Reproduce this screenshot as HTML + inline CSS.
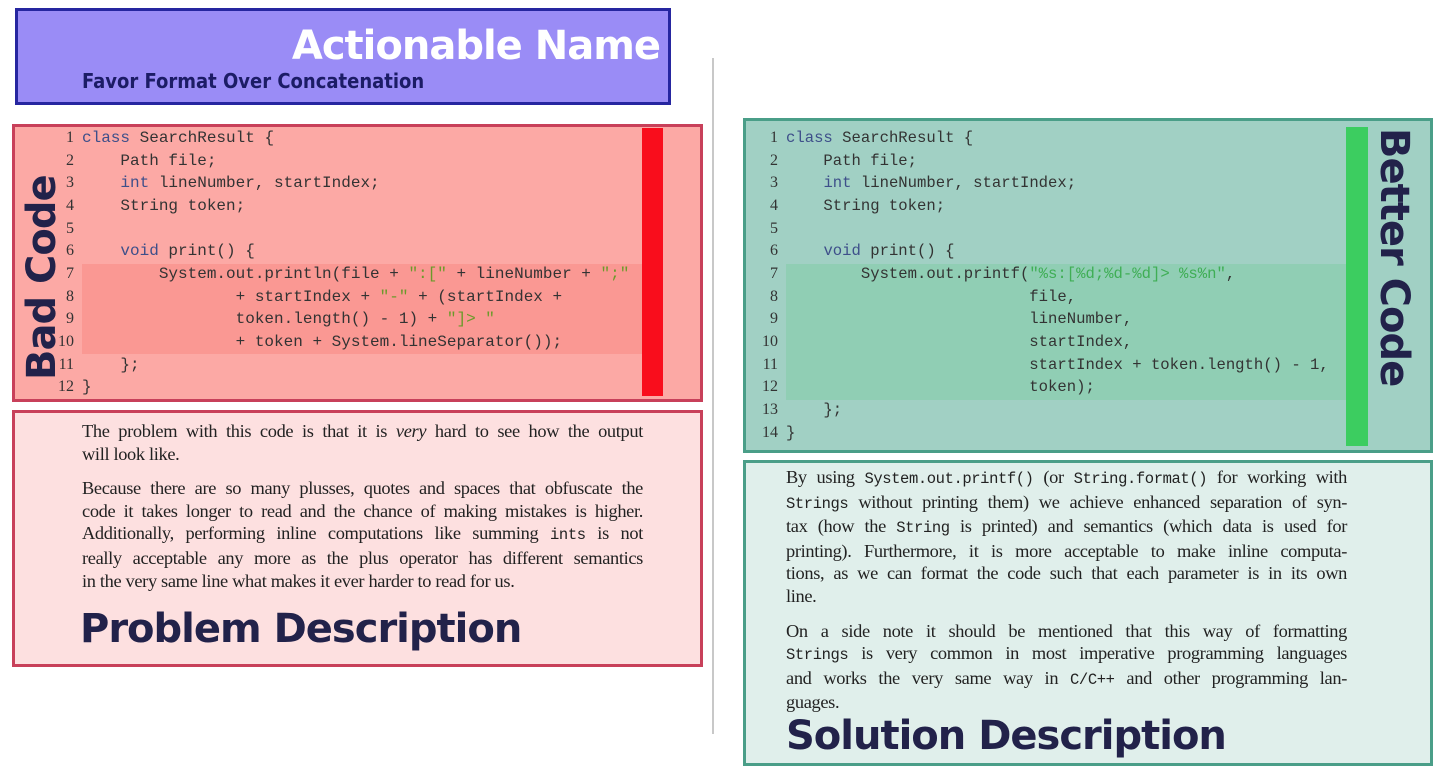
<!DOCTYPE html>
<html><head><meta charset="utf-8"><style>
*{margin:0;padding:0;box-sizing:border-box}
body{width:1436px;height:784px;background:#fff;position:relative;overflow:hidden;font-family:"Liberation Serif",serif;color:#222}
.abs{position:absolute}
.code{font-family:"Liberation Mono",monospace;font-size:16px;line-height:22.65px;white-space:pre;color:#333}
.num{position:absolute;text-align:right;font-family:"Liberation Serif",serif;font-size:16px;line-height:22.65px;color:#333}
.kw{color:#3e4f8a}
.sr{color:#6b9a2a}
.sg{color:#3fae55}
.txt{font-size:18.4px;line-height:22.6px;letter-spacing:-0.35px}
.txt div{text-align:justify;text-align-last:justify;white-space:nowrap}
.txt div.l{text-align-last:left}
.tt{font-family:"Liberation Mono",monospace;font-size:15.5px;letter-spacing:-0.4px}
.head{font-family:"DejaVu Sans",sans-serif;font-weight:bold;color:#22224a;letter-spacing:-1px}
</style></head><body>
<div class="abs" style="left:15px;top:8px;width:656px;height:97px;background:#9a8cf6;border:3px solid #2626a0"></div>
<div class="abs head" style="left:280px;top:20px;width:380px;text-align:right;font-size:40px;color:#fff;line-height:52px">Actionable Name</div>
<div class="abs" style="left:82px;top:68px;font-family:'DejaVu Sans Condensed','DejaVu Sans',sans-serif;font-weight:bold;font-size:20px;color:#1c1c66;line-height:26px">Favor Format Over Concatenation</div>

<div class="abs" style="left:712px;top:58px;width:2px;height:676px;background:#c8c8c8"></div>

<div class="abs" style="left:12px;top:124px;width:691px;height:278px;background:#fca9a5;border:3px solid #c8405a"></div>
<div class="abs" style="left:82px;top:264px;width:560px;height:90px;background:#fa9893"></div>
<div class="abs" style="left:642px;top:128px;width:21px;height:268px;background:#f90d1c"></div>
<div class="num" style="left:50px;top:127px;width:24px">1<br>2<br>3<br>4<br>5<br>6<br>7<br>8<br>9<br>10<br>11<br>12</div>
<div class="abs code" style="left:82px;top:127px"><span class="kw">class</span> SearchResult {
    Path file;
    <span class="kw">int</span> lineNumber, startIndex;
    String token;

    <span class="kw">void</span> print() {
        System.out.println(file + <span class="sr">":["</span> + lineNumber + <span class="sr">";"</span>
                + startIndex + <span class="sr">"-"</span> + (startIndex +
                token.length() - 1) + <span class="sr">"]> "</span>
                + token + System.lineSeparator());
    };
}</div>
<div class="abs head" style="left:20px;top:380px;transform-origin:0 0;transform:rotate(-90deg);font-size:40px;line-height:44px;white-space:nowrap">Bad Code</div>

<div class="abs" style="left:12px;top:410px;width:691px;height:257px;background:#fde0e0;border:3px solid #c8405a"></div>
<div class="abs txt" style="left:82px;top:420px;width:561px">
<div>The problem with this code is that it is <i>very</i> hard to see how the output</div>
<div class="l">will look like.</div>
<div style="margin-top:12px">Because there are so many plusses, quotes and spaces that obfuscate the</div>
<div>code it takes longer to read and the chance of making mistakes is higher.</div>
<div>Additionally, performing inline computations like summing <span class="tt">ints</span> is not</div>
<div>really acceptable any more as the plus operator has different semantics</div>
<div class="l">in the very same line what makes it ever harder to read for us.</div>
</div>
<div class="abs head" style="left:80px;top:603px;font-size:40px;line-height:52px">Problem Description</div>

<div class="abs" style="left:743px;top:118px;width:690px;height:335px;background:#a1d0c4;border:3px solid #4a9e88"></div>
<div class="abs" style="left:786px;top:264px;width:560px;height:136px;background:#90ceb4"></div>
<div class="abs" style="left:1346px;top:127px;width:22px;height:319px;background:#3ccd60"></div>
<div class="num" style="left:752px;top:127px;width:26px">1<br>2<br>3<br>4<br>5<br>6<br>7<br>8<br>9<br>10<br>11<br>12<br>13<br>14</div>
<div class="abs code" style="left:786px;top:127px;font-size:15.6px"><span class="kw">class</span> SearchResult {
    Path file;
    <span class="kw">int</span> lineNumber, startIndex;
    String token;

    <span class="kw">void</span> print() {
        System.out.printf(<span class="sg">"%s:[%d;%d-%d]> %s%n"</span>,
                          file,
                          lineNumber,
                          startIndex,
                          startIndex + token.length() - 1,
                          token);
    };
}</div>
<div class="abs head" style="left:1416px;top:128px;transform-origin:0 0;transform:rotate(90deg);font-size:40px;line-height:44px;white-space:nowrap">Better Code</div>

<div class="abs" style="left:743px;top:460px;width:690px;height:306px;background:#e0efeb;border:3px solid #4a9e88"></div>
<div class="abs txt" style="left:786px;top:466px;width:561px">
<div>By using <span class="tt">System.out.printf()</span> (or <span class="tt">String.format()</span> for working with</div>
<div><span class="tt">Strings</span> without printing them) we achieve enhanced separation of syn-</div>
<div>tax (how the <span class="tt">String</span> is printed) and semantics (which data is used for</div>
<div>printing). Furthermore, it is more acceptable to make inline computa-</div>
<div>tions, as we can format the code such that each parameter is in its own</div>
<div class="l">line.</div>
<div style="margin-top:12px">On a side note it should be mentioned that this way of formatting</div>
<div><span class="tt">Strings</span> is very common in most imperative programming languages</div>
<div>and works the very same way in <span class="tt">C/C++</span> and other programming lan-</div>
<div class="l">guages.</div>
</div>
<div class="abs head" style="left:786px;top:710px;font-size:40px;line-height:52px">Solution Description</div>
</body></html>
